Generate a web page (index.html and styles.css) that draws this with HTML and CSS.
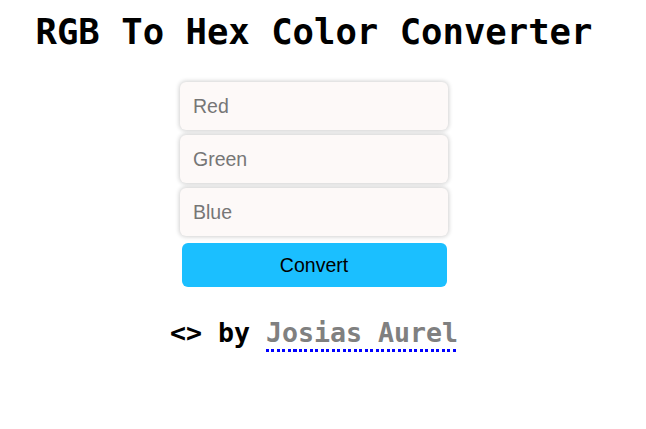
FILE: index.html
```html
<!DOCTYPE html>
<html>
<head>
<meta charset="utf-8">
<link rel="stylesheet" href="styles.css">
</head>
<body>
<main class="page">
  <h1 class="title">RGB To Hex Color Converter</h1>
  <form class="form">
    <input class="field" type="text" placeholder="Red">
    <input class="field" type="text" placeholder="Green">
    <input class="field" type="text" placeholder="Blue">
    <button class="btn" type="button">Convert</button>
  </form>
  <p class="credit">&lt;&gt; by <a class="author" href="#">Josias Aurel</a></p>
</main>
</body>
</html>
```
FILE: styles.css
```css
html, body { margin: 0; padding: 0; background: #fff; }
.page {
  width: 628px;
  display: flex;
  flex-direction: column;
  align-items: center;
}
.title {
  font-family: "DejaVu Sans Mono", monospace;
  font-weight: bold;
  font-size: 35.6px;
  line-height: 42px;
  margin: 11px 0 0 0;
  color: #000;
}
.form {
  margin-top: 29px;
  width: 268px;
  display: flex;
  flex-direction: column;
  align-items: center;
  gap: 5px;
}
.field {
  box-sizing: border-box;
  width: 268px;
  height: 48px;
  border: none;
  border-radius: 6px;
  background: #fdf9f8;
  box-shadow: 0 0 4px 1px rgba(0,0,0,0.18);
  padding: 0 13px;
  font-family: "Liberation Sans", Arial, sans-serif;
  font-size: 19.5px;
  color: #333;
  outline: none;
}
.field::placeholder { color: #767676; }
.btn {
  margin-top: 2px;
  width: 265px;
  height: 44px;
  border: none;
  border-radius: 6px;
  background: #1bbfff;
  font-family: "Liberation Sans", Arial, sans-serif;
  font-size: 19.5px;
  color: #000;
}
.credit {
  margin: 30px 0 0 0;
  font-family: "DejaVu Sans Mono", monospace;
  font-weight: bold;
  font-size: 26.6px;
  line-height: 32px;
  color: #000;
}
.author {
  display: inline-block;
  color: #808080;
  text-decoration: none;
  padding-bottom: 3px;
  background: repeating-linear-gradient(90deg, #0000ff 0 3px, transparent 3px 5.5px) left bottom / 100% 3px no-repeat;
}
```
